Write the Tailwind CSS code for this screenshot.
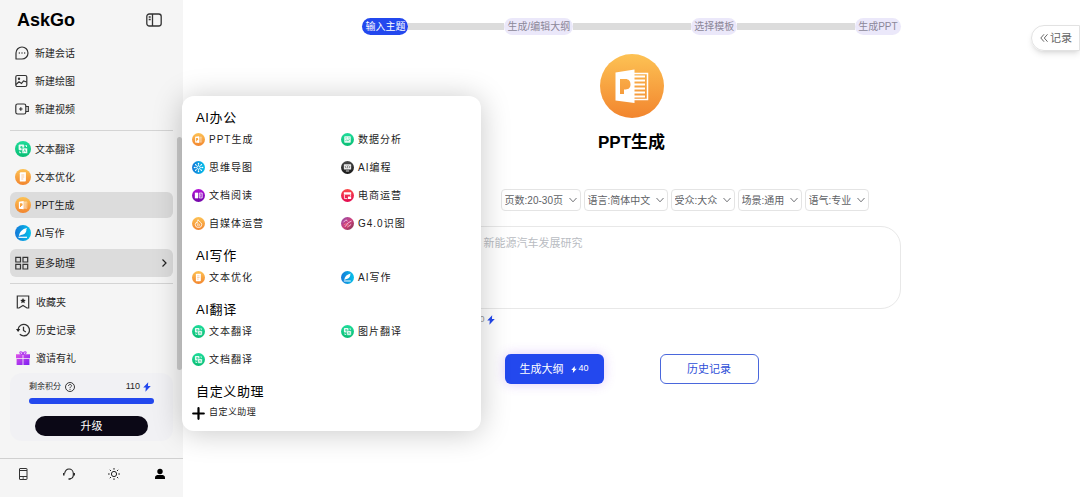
<!DOCTYPE html>
<html lang="zh-CN">
<head>
    <meta charset="UTF-8">
    <meta name="viewport" content="width=device-width, initial-scale=1.0">
    <title>AskGo - PPT生成</title>
    <script src="https://cdn.jsdelivr.net/npm/@tailwindcss/browser@4"></script>
    <style>
        body {
            font-family: 'Liberation Sans', 'Noto Sans CJK SC', sans-serif;
        }
    </style>
</head>
<body class="bg-white text-[#1f1f1f]">
    <!-- Shared icons -->
    <svg class="absolute w-0 h-0" aria-hidden="true">
        <defs>
            <linearGradient id="gOrange" x1="0" y1="0" x2="0" y2="1"><stop offset="0" stop-color="#fdc254"/><stop offset="1" stop-color="#f2852e"/></linearGradient>
            <linearGradient id="gGreen" x1="0" y1="0" x2="0" y2="1"><stop offset="0" stop-color="#1fdc9a"/><stop offset="1" stop-color="#08bd74"/></linearGradient>
            <linearGradient id="gBlue" x1="0" y1="0" x2="1" y2="0"><stop offset="0" stop-color="#1478d8"/><stop offset="1" stop-color="#06c2ea"/></linearGradient>
            <linearGradient id="gPurple" x1="0" y1="0" x2="0" y2="1"><stop offset="0" stop-color="#b413d8"/><stop offset="1" stop-color="#7206a8"/></linearGradient>
            <linearGradient id="gDark" x1="0" y1="0" x2="0" y2="1"><stop offset="0" stop-color="#4a4a4a"/><stop offset="1" stop-color="#161616"/></linearGradient>
            <linearGradient id="gRed" x1="0" y1="0" x2="0" y2="1"><stop offset="0" stop-color="#fb4a4a"/><stop offset="1" stop-color="#e30a50"/></linearGradient>
            <linearGradient id="gPink" x1="0" y1="0" x2="1" y2="1"><stop offset="0" stop-color="#8a4fb0"/><stop offset=".5" stop-color="#d0407c"/><stop offset="1" stop-color="#7b3550"/></linearGradient>
            <linearGradient id="gGift" x1="0" y1="0" x2="1" y2="1"><stop offset="0" stop-color="#e052e8"/><stop offset="1" stop-color="#7a1df2"/></linearGradient>
        </defs>
        <symbol id="ppt" viewBox="0 0 64 64">
            <circle cx="32" cy="32" r="32" fill="url(#gOrange)"/>
            <path d="M34 19.500h13.500v26H34" fill="none" stroke="#fff" stroke-width="1.500"/>
            <path d="M34 22.500h11M34 26.500h11M34 30.500h11M34 34.500h11M34 38.500h11M34 42.500h11" stroke="#fff" stroke-width="1.800"/>
            <path fill="#fff" fill-rule="evenodd" d="M15.500 18.500 34.500 15.500v33.500L15.500 46.500zM20 25v15h4v-4.500h1.500c3.500 0 5-2 5-5.200s-1.800-5.300-5-5.300z"/>
        </symbol>
        <symbol id="trans" viewBox="0 0 16 16">
            <circle cx="8" cy="8" r="8" fill="url(#gGreen)"/>
            <rect x="3.600" y="3.600" width="5.600" height="5.600" rx="1" fill="#fff" fill-opacity=".9"/>
            <path d="M5 6.200h2.800M6.400 5v2.700" stroke="#12c884" stroke-width=".8"/>
            <rect x="7" y="7" width="5.600" height="5.600" rx="1" fill="#fff" stroke="#12c884" stroke-width=".7"/>
            <path d="M10.500 4.500h1v1.500M4.700 10.300v1.400h1.500" fill="none" stroke="#fff" stroke-width=".9"/>
            <path d="M8.600 11.300l1.200-2.800 1.200 2.800" fill="none" stroke="#12c884" stroke-width=".7"/>
        </symbol>
        <symbol id="doc" viewBox="0 0 16 16">
            <circle cx="8" cy="8" r="8" fill="url(#gOrange)"/>
            <path d="M4.800 4.200q0-.9.9-.9h5.200v8.300q0 .9-.9.9H4.800z" fill="#fff"/>
            <path d="M6.300 6h3M6.300 8h3M6.300 10h2" stroke="#f8b070" stroke-width=".7"/>
        </symbol>
        <symbol id="pen" viewBox="0 0 16 16">
            <circle cx="8" cy="8" r="8" fill="url(#gBlue)"/>
            <path d="M4 11c.5-4 3-7 8-8-.3 1.200-.8 1.800-1.400 2.300h1c-.8 2.800-2.600 4.700-5.600 4.700z" fill="#fff"/>
            <path d="M3.500 12.300h8.500" stroke="#fff" stroke-width="1.200"/>
        </symbol>
        <symbol id="mind" viewBox="0 0 16 16">
            <circle cx="8" cy="8" r="8" fill="url(#gBlue)"/>
            <circle cx="8" cy="8" r="2" fill="none" stroke="#fff"/>
            <path d="M8 6V3M8 10v3M6 8H3M10 8h3M6.600 6.600 4.500 4.500M9.400 6.600l2.100-2.100M6.600 9.400l-2.100 2.100M9.400 9.400l2.100 2.100" stroke="#fff" stroke-width=".8"/>
            <g fill="#fff"><circle cx="8" cy="3" r=".9"/><circle cx="8" cy="13" r=".9"/><circle cx="3" cy="8" r=".9"/><circle cx="13" cy="8" r=".9"/><circle cx="4.500" cy="4.500" r=".9"/><circle cx="11.500" cy="4.500" r=".9"/><circle cx="4.500" cy="11.500" r=".9"/><circle cx="11.500" cy="11.500" r=".9"/></g>
        </symbol>
        <symbol id="book" viewBox="0 0 16 16">
            <circle cx="8" cy="8" r="8" fill="url(#gPurple)"/>
            <path d="M3.500 4.500h4v7h-4z" fill="#fff"/>
            <path d="M9 5h3.500v6H9z" fill="none" stroke="#fff"/>
            <path d="M10.700 6.500v3" stroke="#fff" stroke-width=".8"/>
        </symbol>
        <symbol id="flame" viewBox="0 0 16 16">
            <circle cx="8" cy="8" r="8" fill="url(#gOrange)"/>
            <path d="M7.500 3.300c.6 2.500 4.500 3 4.500 6a4 3.700 0 0 1-8 0c0-1.300.7-2.300 1.500-2.800 0 .8.300 1.300.8 1.500C6.300 6.500 6.500 4.800 7.500 3.300z" fill="none" stroke="#fff"/>
            <circle cx="8" cy="9.800" r="1.300" fill="none" stroke="#fff" stroke-width=".8"/>
        </symbol>
        <symbol id="chart" viewBox="0 0 16 16">
            <circle cx="8" cy="8" r="8" fill="url(#gGreen)"/>
            <rect x="4" y="4" width="8" height="8" rx=".8" fill="#fff" fill-opacity=".9"/>
            <path d="M5.500 6h1.500M9 6h1.500M5.300 10l1.700-1.700 1.500 1.200 2.200-1.700" fill="none" stroke="#12c884" stroke-width=".8"/>
        </symbol>
        <symbol id="code" viewBox="0 0 16 16">
            <circle cx="8" cy="8" r="8" fill="url(#gDark)"/>
            <rect x="3.500" y="4" width="9" height="6.500" rx=".8" fill="#fff" fill-opacity=".9"/>
            <path d="M6.300 5.800 5 7.200l1.300 1.400M9.700 5.800 11 7.200 9.700 8.600M8.500 5.500l-1 3.400" fill="none" stroke="#333" stroke-width=".7"/>
            <path d="M6 12.300h4" stroke="#fff"/>
        </symbol>
        <symbol id="shop" viewBox="0 0 16 16">
            <circle cx="8" cy="8" r="8" fill="url(#gRed)"/>
            <path d="M3.500 4h9v2.900h-9z" fill="#fff"/>
            <path d="M4.200 7v4.800h3.500M11.800 7v2" fill="none" stroke="#fff"/>
            <path d="M8.500 9.300h4v3h-4z" fill="#fff"/>
        </symbol>
        <symbol id="vision" viewBox="0 0 16 16">
            <circle cx="8" cy="8" r="8" fill="url(#gPink)"/>
            <path d="M3 6.500 6 3.500l2 1.500M5 12l4-5 4-2M9 12l3.500-3" fill="none" stroke="#f3c3e2" stroke-width="1.200"/>
            <path d="M3.500 9.500 7 8M8 13l1-4" stroke="#f2777f" stroke-width="1.200"/>
        </symbol>
        <symbol id="bolt" viewBox="0 0 10 12">
            <path d="M6.500 0 .3 6.700h3.200L3 12 9.700 4.900H6.200z" fill="currentColor"/>
        </symbol>
        <symbol id="down" viewBox="0 0 8 8">
            <path d="M.5 2 4 5.800 7.500 2" fill="none" stroke="currentColor" stroke-width=".9"/>
        </symbol>
    </svg>

    <div class="flex min-h-screen">
        <!-- Sidebar -->
        <aside class="relative flex w-[183px] shrink-0 flex-col bg-[#f5f5f5] text-[10px]">
            <header class="flex h-[39px] items-center justify-between pl-[17px] pr-[21px]">
                <h1 class="text-lg font-bold text-black">AskGo</h1>
                <button type="button" aria-label="收起侧栏">
                    <svg class="h-[14px] w-4" viewBox="0 0 16 14" fill="none" stroke="#333" stroke-width="1.300"><rect x=".8" y="1" width="14.400" height="12" rx="2.500"/><path d="M6.500 1v12M2.700 4h2M2.700 6.500h2"/></svg>
                </button>
            </header>

            <nav class="mx-[10px]">
                <a href="#" class="flex h-7 items-center gap-[6px] pl-[5px]">
                    <svg class="size-[14px]" viewBox="0 0 14 14" fill="none" stroke="#333" stroke-width="1.200"><path d="M1 13V7a6 6 0 1 1 6 6z" stroke-linejoin="round"/><path d="M3.800 7h1M6.500 7h1M9.200 7h1" stroke-width="1.300"/></svg>
                    新建会话
                </a>
                <a href="#" class="flex h-7 items-center gap-[6px] pl-[5px]">
                    <svg class="size-[14px]" viewBox="0 0 14 14" fill="none" stroke="#333" stroke-width="1.200"><rect x=".8" y="1.500" width="11" height="11" rx="1.500"/><path d="M1 10.500l3-2.700 2.500 1.700 2-2.500 3.200 1"/><circle cx="4" cy="4.700" r=".6"/></svg>
                    新建绘图
                </a>
                <a href="#" class="flex h-7 items-center gap-[6px] pl-[5px]">
                    <svg class="size-[14px]" viewBox="0 0 14 14" fill="none" stroke="#333" stroke-width="1.200"><rect x=".8" y="2" width="10" height="10" rx="1.800"/><path d="M10.800 4.500h2.500v5h-2.500M4 7h3.600M5.800 5.200v3.600"/></svg>
                    新建视频
                </a>
            </nav>

            <hr class="mx-[10px] mt-[7px] mb-1 border-[#d4d4d4]">

            <nav class="mx-[10px]">
                <a href="#" class="my-px flex h-[26px] items-center gap-1 rounded-md pl-[5px]"><svg class="size-4"><use href="#trans"/></svg>文本翻译</a>
                <a href="#" class="my-0.5 flex h-[26px] items-center gap-1 rounded-md pl-[5px]"><svg class="size-4"><use href="#doc"/></svg>文本优化</a>
                <a href="#" class="my-0.5 flex h-[26px] items-center gap-1 rounded-md bg-[#dcdcdc] pl-[5px]"><svg class="size-4"><use href="#ppt"/></svg>PPT生成</a>
                <a href="#" class="mt-0.5 mb-[3px] flex h-[26px] items-center gap-1 rounded-md pl-[5px]"><svg class="size-4"><use href="#pen"/></svg>AI写作</a>
                <button type="button" class="flex h-7 w-full items-center gap-[6px] rounded-md bg-[#dcdcdc] pl-[5px] pr-[5px]">
                    <svg class="size-[14px]" viewBox="0 0 14 14" fill="none" stroke="#333" stroke-width="1.200"><path d="M.8 1.300h4.700V6H.8zM8 1.300h4.700V6H8zM.8 8.300h4.700V13H.8zM8 8.300h4.700V13H8z"/></svg>
                    更多助理
                    <svg class="ml-auto size-2" viewBox="0 0 8 8" fill="none" stroke="#222" stroke-width="1.200"><path d="M2.500 .5 6 4 2.500 7.500"/></svg>
                </button>
            </nav>

            <hr class="mx-[10px] mt-[6px] mb-1 border-[#d4d4d4]">

            <nav class="mx-[10px]">
                <a href="#" class="flex h-7 items-center gap-[6px] pl-[6px]">
                    <svg class="size-[14px]" viewBox="0 0 14 14" fill="none" stroke="#333" stroke-width="1.200"><path d="M1.300 1h11.400v12H11L7 10.500 3 13H1.300z"/><path d="M7 3l.9 1.700 1.900.3-1.400 1.300.3 1.900L7 7.300l-1.700.9.300-1.900L4.200 5l1.900-.3z" fill="#222" stroke="none"/></svg>
                    收藏夹
                </a>
                <a href="#" class="flex h-7 items-center gap-[6px] pl-[6px]">
                    <svg class="size-[14px]" viewBox="0 0 14 14" fill="none" stroke="#333" stroke-width="1.300"><path d="M2.100 6.500A5.700 5.700 0 1 1 3.800 11.200M7.500 3.800v3.700l2.300 1.500"/><path d="M0 6h4.300L2.100 9z" fill="#222" stroke="none"/></svg>
                    历史记录
                </a>
                <a href="#" class="flex h-7 items-center gap-[6px] pl-[6px]">
                    <svg class="size-[14px]" viewBox="0 0 14 14"><path d="M0 3.300h6.600v4H0zM7.400 3.300H14v4H7.400zM.6 7.900h6V14h-6zM7.400 7.900h6V14h-6z" fill="url(#gGift)"/><path d="M6.800 3.500C4 3.500 3 .8 4.700.8 6 .8 6.800 2.300 6.800 3.500zm.4 0c2.800 0 3.800-2.700 2.100-2.700C8 .8 7.200 2.300 7.200 3.500z" fill="none" stroke="#b43df0" stroke-width="1.100"/></svg>
                    邀请有礼
                </a>
            </nav>

            <section class="mx-[10px] mt-px rounded-xl bg-[#f1f1f4] px-[19px] pt-[7px] pb-[5px]">
                <div class="flex h-[14px] items-center pr-[3px] text-[8px]">
                    <span>剩余积分</span>
                    <svg class="ml-1 size-[10px]" viewBox="0 0 10 10" fill="none" stroke="#222" stroke-width=".9"><circle cx="5" cy="5" r="4.500"/><path d="M3.500 4c0-2 3-2 3-.2C6.500 4.800 5 4.900 5 6.200M5 7v.9"/></svg>
                    <span class="ml-auto text-[9px]">110</span>
                    <svg class="ml-[3px] h-[10px] w-2 text-[#2348ee]"><use href="#bolt"/></svg>
                </div>
                <div class="mt-1 h-[6px] rounded-full bg-[#2348ee]"></div>
                <button type="button" class="mx-[6px] mt-3 block h-5 w-[113px] rounded-full bg-[#0b0816] text-[11px] leading-5 text-white">升级</button>
            </section>

            <footer class="mt-auto flex h-[39px] items-start justify-around border-t border-[#d0d0d0] pt-[9px]">
                <button type="button" aria-label="手机版"><svg class="size-3" viewBox="0 0 12 12" fill="none" stroke="#333"><rect x="2.500" y=".5" width="7.500" height="11" rx=".5"/><path d="M2.500 2.500H10M2.500 8.500H10M5.500 10h1.500"/></svg></button>
                <button type="button" aria-label="客服"><svg class="size-3" viewBox="0 0 12 12" fill="none" stroke="#222" stroke-width="1.100"><path d="M1.700 5.500a4.300 4.500 0 0 1 8.600 0v1.500c0 2-1.300 3.500-3.300 3.800"/><path d="M.8 5v2.500M11.200 5v2.500M5.500 11h2" stroke-width="1.500"/></svg></button>
                <button type="button" aria-label="主题"><svg class="size-3" viewBox="0 0 12 12" fill="none" stroke="#222"><circle cx="6" cy="6" r="2.600"/><path d="M6 0v1.700M6 10.300V12M0 6h1.700M10.300 6H12M1.800 1.800 3 3M9 9l1.200 1.200M1.800 10.200 3 9M9 3l1.200-1.200"/></svg></button>
                <button type="button" aria-label="账户"><svg class="size-3" viewBox="0 0 12 12" fill="#000"><circle cx="6" cy="3.500" r="2.700"/><path d="M1 11V9.500C1 7.500 3 7 4.500 7h3C9 7 11 7.500 11 9.500V11z"/></svg></button>
            </footer>

            <!-- Scroll thumb -->
            <div class="absolute top-[137px] right-px h-[233px] w-[5px] rounded-full bg-[#cbcbcb]"></div>

            <!-- Assistant menu -->
            <div class="absolute top-24 left-[182px] z-10 w-[299px] rounded-xl bg-white px-[10px] pt-[14px] pb-[4px] tracking-widest text-[#222] shadow-[0_2px_30px_rgba(0,0,0,0.22)]">
                <h2 class="pl-1 text-[13px] leading-[15px] tracking-wider text-black">AI办公</h2>
                <div class="mb-[11px] grid grid-cols-[149px_1fr]">
                    <a href="#" class="flex h-7 items-center gap-1"><svg class="size-[13px]"><use href="#ppt"/></svg>PPT生成</a>
                    <a href="#" class="flex h-7 items-center gap-1"><svg class="size-[13px]"><use href="#chart"/></svg>数据分析</a>
                    <a href="#" class="flex h-7 items-center gap-1"><svg class="size-[13px]"><use href="#mind"/></svg>思维导图</a>
                    <a href="#" class="flex h-7 items-center gap-1"><svg class="size-[13px]"><use href="#code"/></svg>AI编程</a>
                    <a href="#" class="flex h-7 items-center gap-1"><svg class="size-[13px]"><use href="#book"/></svg>文档阅读</a>
                    <a href="#" class="flex h-7 items-center gap-1"><svg class="size-[13px]"><use href="#shop"/></svg>电商运营</a>
                    <a href="#" class="flex h-7 items-center gap-1"><svg class="size-[13px]"><use href="#flame"/></svg>自媒体运营</a>
                    <a href="#" class="flex h-7 items-center gap-1"><svg class="size-[13px]"><use href="#vision"/></svg>G4.0识图</a>
                </div>
                <h2 class="pl-1 text-[13px] leading-[15px] tracking-wider text-black">AI写作</h2>
                <div class="mb-[11px] grid grid-cols-[149px_1fr]">
                    <a href="#" class="flex h-7 items-center gap-1"><svg class="size-[13px]"><use href="#doc"/></svg>文本优化</a>
                    <a href="#" class="flex h-7 items-center gap-1"><svg class="size-[13px]"><use href="#pen"/></svg>AI写作</a>
                </div>
                <h2 class="pl-1 text-[13px] leading-[15px] tracking-wider text-black">AI翻译</h2>
                <div class="mb-[11px] grid grid-cols-[149px_1fr]">
                    <a href="#" class="flex h-7 items-center gap-1"><svg class="size-[13px]"><use href="#trans"/></svg>文本翻译</a>
                    <a href="#" class="flex h-7 items-center gap-1"><svg class="size-[13px]"><use href="#trans"/></svg>图片翻译</a>
                    <a href="#" class="flex h-7 items-center gap-1"><svg class="size-[13px]"><use href="#trans"/></svg>文档翻译</a>
                </div>
                <h2 class="pl-1 text-[13px] leading-[15px] tracking-wider text-black">自定义助理</h2>
                <a href="#" class="flex h-7 items-center gap-1 text-[9px] tracking-wider">
                    <svg class="size-[13px]" viewBox="0 0 13 13"><path d="M6.500 1.200v10.600M1.200 6.500h10.600" stroke="#000" stroke-width="2.200" stroke-linecap="round"/></svg>
                    自定义助理
                </a>
            </div>
        </aside>

        <!-- Main content -->
        <main class="relative flex-1 pt-[18px] text-[10px]">
            <button type="button" class="absolute top-[25px] right-0 flex h-[26px] items-center gap-[2px] rounded-l-full border border-[#e2e2e2] pr-[7px] pl-2 text-[11px] text-[#666] shadow-md">
                <svg class="size-2" viewBox="0 0 8 8" fill="none" stroke="#666"><path d="M4 .3.800 4 4 7.700M7.500.300 4.300 4l3.200 3.700"/></svg>
                记录
            </button>

            <div class="mx-auto flex w-3/5 flex-col items-center">
                <ol class="flex h-[17px] w-full items-center whitespace-nowrap text-[#8b8798]">
                    <li class="rounded-full bg-[#2348ee] px-[3px] leading-[17px] text-white">输入主题</li>
                    <li class="h-[7px] grow-[96] bg-[#dcdcdc]"></li>
                    <li class="rounded-full bg-[#ebe8fa] px-[3px] leading-[17px]">生成/编辑大纲</li>
                    <li class="h-[7px] grow-[118] bg-[#dcdcdc]"></li>
                    <li class="rounded-full bg-[#ebe8fa] px-[3px] leading-[17px]">选择模板</li>
                    <li class="h-[7px] grow-[118] bg-[#dcdcdc]"></li>
                    <li class="rounded-full bg-[#ebe8fa] px-[3px] leading-[17px]">生成PPT</li>
                </ol>

                <svg class="mt-[19px] size-16"><use href="#ppt"/></svg>
                <h2 class="mt-[13px] text-[17px] leading-6 font-bold text-black">PPT生成</h2>

                <form class="mt-[34px] flex w-full flex-col items-center">
                    <div class="mr-8 flex gap-[3px] self-end text-[#606266]">
                        <div class="relative">
                            <select aria-label="页数" class="h-[22px] w-20 appearance-none rounded border border-[#e4e4e4] bg-white pl-[3px]"><option>页数:20-30页</option></select>
                            <svg class="pointer-events-none absolute top-[7px] right-1 size-2"><use href="#down"/></svg>
                        </div>
                        <div class="relative">
                            <select aria-label="语言" class="h-[22px] w-[84px] appearance-none rounded border border-[#e4e4e4] bg-white pl-[3px]"><option>语言:简体中文</option></select>
                            <svg class="pointer-events-none absolute top-[7px] right-1 size-2"><use href="#down"/></svg>
                        </div>
                        <div class="relative">
                            <select aria-label="受众" class="h-[22px] w-16 appearance-none rounded border border-[#e4e4e4] bg-white pl-[3px]"><option>受众:大众</option></select>
                            <svg class="pointer-events-none absolute top-[7px] right-1 size-2"><use href="#down"/></svg>
                        </div>
                        <div class="relative">
                            <select aria-label="场景" class="h-[22px] w-16 appearance-none rounded border border-[#e4e4e4] bg-white pl-[3px]"><option>场景:通用</option></select>
                            <svg class="pointer-events-none absolute top-[7px] right-1 size-2"><use href="#down"/></svg>
                        </div>
                        <div class="relative">
                            <select aria-label="语气" class="h-[22px] w-16 appearance-none rounded border border-[#e4e4e4] bg-white pl-[3px]"><option>语气:专业</option></select>
                            <svg class="pointer-events-none absolute top-[7px] right-1 size-2"><use href="#down"/></svg>
                        </div>
                    </div>

                    <textarea aria-label="主题" placeholder="请输入主题内容，如：新能源汽车发展研究" class="mt-[15px] block h-[83px] w-full resize-none rounded-[20px] border border-[#e8e8e8] px-[10px] py-2 text-[11px] leading-4 placeholder:text-[#b9bcc2]"></textarea>

                    <div class="mt-[5px] flex h-3 w-full items-center gap-[3px] text-[9px] text-[#999]">
                        <span class="w-[122px] text-right">剩余积分：110</span>
                        <svg class="h-[10px] w-2 text-[#2348ee]"><use href="#bolt"/></svg>
                    </div>

                    <div class="mt-7 flex gap-14 text-[11px]">
                        <button type="submit" class="flex h-[30px] w-[99px] items-center justify-center gap-2 rounded-md bg-[#2348ee] text-white shadow-[0_0_12px_rgba(150,80,240,0.3)]">
                            生成大纲
                            <span class="flex items-center gap-px text-[9px]"><svg class="h-[7px] w-[6px]"><use href="#bolt"/></svg>40</span>
                        </button>
                        <button type="button" class="h-[30px] w-[99px] rounded-md border border-[#4a67dc] text-[#2f4fd8]">历史记录</button>
                    </div>
                </form>
            </div>
        </main>
    </div>
</body>
</html>
